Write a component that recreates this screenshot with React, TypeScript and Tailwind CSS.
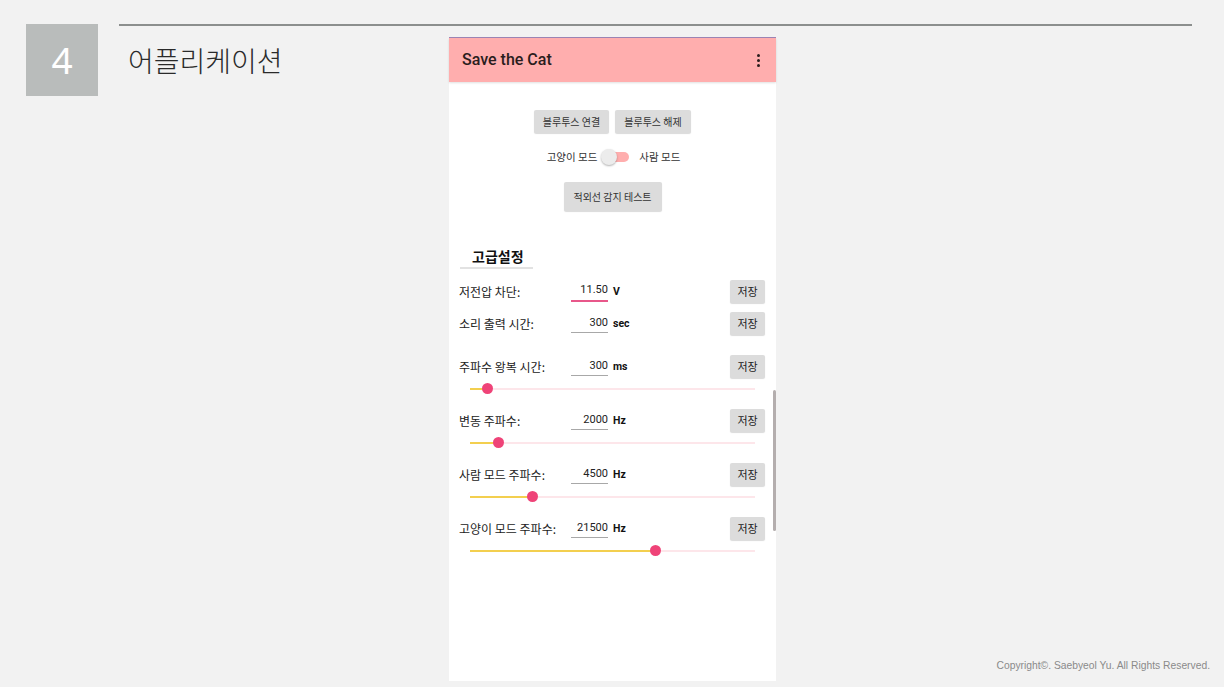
import React from 'react'

const KR = { fontFamily: '"Noto Sans CJK KR", "Noto Sans", sans-serif' }

type Setting = {
  label: string
  value: string
  unit: string
  focused?: boolean
  slider?: number
  gap: string
}

const settings: Setting[] = [
  { label: '저전압 차단:', value: '11.50', unit: 'V', focused: true, gap: 'mt-0' },
  { label: '소리 출력 시간:', value: '300', unit: 'sec', gap: 'mt-[9px]' },
  { label: '주파수 왕복 시간:', value: '300', unit: 'ms', slider: 17, gap: 'mt-[20px]' },
  { label: '변동 주파수:', value: '2000', unit: 'Hz', slider: 28, gap: 'mt-[8px]' },
  { label: '사람 모드 주파수:', value: '4500', unit: 'Hz', slider: 62, gap: 'mt-[8px]' },
  { label: '고양이 모드 주파수:', value: '21500', unit: 'Hz', slider: 185, gap: 'mt-[8px]' },
]

function Slider({ pos }: { pos: number }) {
  return (
    <div className="relative ml-[21px] h-[23px] w-[285px]">
      <div className="absolute left-0 right-0 top-[10px] h-[2px] bg-[#fde6ea]" />
      <div className="absolute left-0 top-[10px] h-[2px] bg-[#f3cf4f]" style={{ width: pos }} />
      <div
        className="absolute top-[5px] h-[11px] w-[11px] rounded-full bg-[#ef4378]"
        style={{ left: pos - 5 }}
      />
    </div>
  )
}

function SettingRow({ s }: { s: Setting }) {
  return (
    <div className={s.gap}>
      <div className="flex h-[23px] items-center pl-[10px] pr-[11px]">
        <span className="w-[112px] text-[12px] text-[#222]" style={KR}>
          {s.label}
        </span>
        <span
          className={`w-[37px] pt-[1px] pb-[1px] text-right text-[11px] text-[#222] border-b ${
            s.focused ? 'border-[#e8578a] border-b-2' : 'border-[#a8a8a8]'
          }`}
          style={{ fontFamily: 'Roboto, sans-serif' }}
        >
          {s.value}
        </span>
        <span
          className="ml-[5px] text-[10.5px] font-bold text-[#111]"
          style={{ fontFamily: 'Roboto, sans-serif' }}
        >
          {s.unit}
        </span>
        <button
          className="ml-auto h-[23px] w-[35px] rounded-[2px] bg-[#dcdcdc] text-[11px] text-[#222] shadow-[0_1px_1px_rgba(0,0,0,0.15)]"
          style={KR}
        >
          저장
        </button>
      </div>
      {s.slider !== undefined && <Slider pos={s.slider} />}
    </div>
  )
}

function Phone() {
  return (
    <div className="relative flex h-[644px] w-[327px] flex-col bg-white border-t border-[#9d86b5]">
      <div className="flex h-[44px] items-center justify-between bg-[#ffaeae] pl-[13px] pr-[16px] shadow-[0_1px_2px_rgba(0,0,0,0.12)]">
        <span className="text-[16px] font-medium text-[#2b1d1d]" style={{ fontFamily: 'Roboto, sans-serif' }}>
          Save the Cat
        </span>
        <div className="flex flex-col gap-[2px]">
          <span className="h-[3px] w-[3px] rounded-full bg-[#2b1d1d]" />
          <span className="h-[3px] w-[3px] rounded-full bg-[#2b1d1d]" />
          <span className="h-[3px] w-[3px] rounded-full bg-[#2b1d1d]" />
        </div>
      </div>

      <div className="mt-[28px] flex justify-center gap-[6px]">
        <button
          className="h-[23px] w-[75px] rounded-[2px] bg-[#dcdcdc] text-[10px] text-[#333] shadow-[0_1px_1px_rgba(0,0,0,0.15)]"
          style={KR}
        >
          블루투스 연결
        </button>
        <button
          className="h-[23px] w-[76px] rounded-[2px] bg-[#dcdcdc] text-[10px] text-[#333] shadow-[0_1px_1px_rgba(0,0,0,0.15)]"
          style={KR}
        >
          블루투스 해제
        </button>
      </div>

      <div className="mt-[16px] flex h-[16px] items-center justify-center pl-[2px]" style={KR}>
        <span className="text-[10.5px] text-[#333]">고양이 모드</span>
        <div className="relative ml-[4px] h-[16px] w-[28px]">
          <div className="absolute left-[5px] right-0 top-[3px] h-[10px] rounded-full bg-[#ffaeae]" />
          <div className="absolute left-0 top-0 h-[16px] w-[16px] rounded-full bg-[#ececec] shadow-[0_1px_2px_rgba(0,0,0,0.3)]" />
        </div>
        <span className="ml-[10px] text-[10.5px] text-[#333]">사람 모드</span>
      </div>

      <div className="mt-[17px] flex justify-center">
        <button
          className="h-[29px] w-[98px] rounded-[2px] bg-[#dcdcdc] text-[10px] text-[#333] shadow-[0_1px_1px_rgba(0,0,0,0.15)]"
          style={KR}
        >
          적외선 감지 테스트
        </button>
      </div>

      <div className="mt-[36px] ml-[11px] w-[73px] border-b-2 border-[#e2e2e2] pb-[2px] pl-[12px]">
        <span className="block text-[14px] font-bold leading-[18px] text-[#111]" style={KR}>
          고급설정
        </span>
      </div>

      <div className="mt-[11px]">
        {settings.map((s) => (
          <SettingRow key={s.label} s={s} />
        ))}
      </div>

      <div className="absolute right-[0px] top-[352px] h-[141px] w-[3px] rounded-full bg-[#b4aeae]" />
    </div>
  )
}

export default function App() {
  return (
    <div className="relative h-[687px] w-[1224px] overflow-hidden bg-[#f2f2f2]">
      <div className="flex pt-[24px] pl-[26px]">
        <div className="flex h-[72px] w-[72px] shrink-0 items-center justify-center bg-[#b9bcbb]">
          <span className="text-[37px] text-white" style={{ fontFamily: '"Noto Sans", sans-serif' }}>
            4
          </span>
        </div>
        <div className="ml-[21px] flex-1 pr-[32px]">
          <div className="h-[2px] w-full bg-[#8c8f8e]" />
          <div className="flex">
            <h1
              className="mt-[15px] ml-[9px] w-[321px] text-[28px] font-light leading-[38px] text-[#2a2a2a]"
              style={KR}
            >
              어플리케이션
            </h1>
            <div className="mt-[11px]">
              <Phone />
            </div>
          </div>
        </div>
      </div>
      <div
        className="absolute bottom-[14px] right-[14px] text-[10.3px] text-[#8a8a8a]"
        style={{ fontFamily: '"Liberation Sans", sans-serif' }}
      >
        Copyright©. Saebyeol Yu. All Rights Reserved.
      </div>
    </div>
  )
}
